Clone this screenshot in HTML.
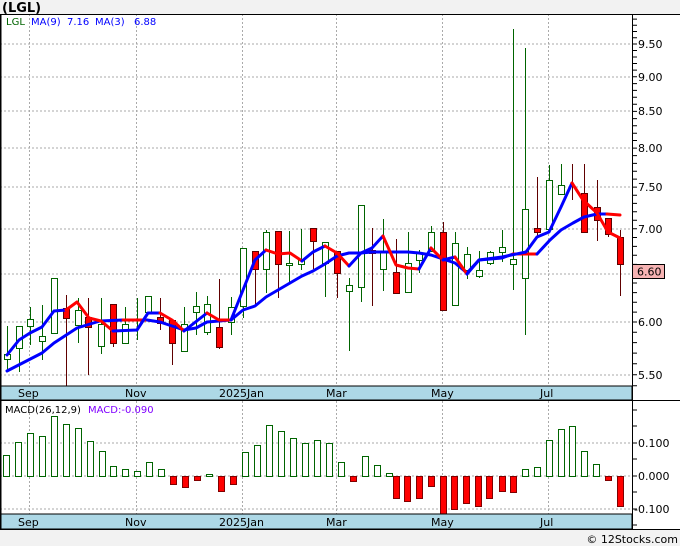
<!DOCTYPE html>
<html><head><meta charset="utf-8"><style>
html,body{margin:0;padding:0;background:#f2f2f2;}
svg{display:block;}
text{font-family:"DejaVu Sans","Liberation Sans",sans-serif;}
</style></head><body>
<svg width="680" height="546" viewBox="0 0 680 546" xmlns="http://www.w3.org/2000/svg">
<rect x="0" y="0" width="680" height="546" fill="#f2f2f2"/>
<text x="2" y="12" font-size="13" font-weight="bold" fill="#000" font-family="Liberation Sans">(LGL)</text>
<!-- main panel -->
<rect x="0" y="14" width="632" height="516" fill="#fff"/>
<rect x="632" y="14" width="48" height="516" fill="#fff"/>
<g stroke="#aaa" stroke-dasharray="2,2" stroke-width="1">
<line x1="0" x2="632" y1="44" y2="44"/><line x1="0" x2="632" y1="77" y2="77"/><line x1="0" x2="632" y1="111" y2="111"/><line x1="0" x2="632" y1="148" y2="148"/><line x1="0" x2="632" y1="187" y2="187"/><line x1="0" x2="632" y1="229" y2="229"/><line x1="0" x2="632" y1="274" y2="274"/><line x1="0" x2="632" y1="322" y2="322"/><line x1="0" x2="632" y1="375" y2="375"/>
<line x1="29.5" x2="29.5" y1="14" y2="386"/><line x1="136.5" x2="136.5" y1="14" y2="386"/><line x1="242.5" x2="242.5" y1="14" y2="386"/><line x1="336.5" x2="336.5" y1="14" y2="386"/><line x1="442.5" x2="442.5" y1="14" y2="386"/><line x1="548.5" x2="548.5" y1="14" y2="386"/>
<line x1="0" x2="632" y1="443" y2="443"/><line x1="0" x2="632" y1="476" y2="476"/><line x1="0" x2="632" y1="509" y2="509"/>
<line x1="29.5" x2="29.5" y1="401" y2="514"/><line x1="136.5" x2="136.5" y1="401" y2="514"/><line x1="242.5" x2="242.5" y1="401" y2="514"/><line x1="336.5" x2="336.5" y1="401" y2="514"/><line x1="442.5" x2="442.5" y1="401" y2="514"/><line x1="548.5" x2="548.5" y1="401" y2="514"/>
</g>
<text x="6" y="25" font-size="10" fill="#006400">LGL</text>
<text x="31" y="25" font-size="10" fill="#0000ff">MA(9)</text>
<text x="67" y="25" font-size="10" fill="#0000ff">7.16</text>
<text x="95" y="25" font-size="10" fill="#0000ff">MA(3)</text>
<text x="134" y="25" font-size="10" fill="#0000ff">6.88</text>
<!-- candles -->
<g stroke-width="1">
<g stroke="#006400" fill="#fff">
<line x1="7.5" x2="7.5" y1="326" y2="372"/><rect x="4.5" y="354.5" width="6" height="5"/>
<line x1="19.5" x2="19.5" y1="326" y2="372"/><rect x="16.5" y="326.5" width="6" height="22"/>
<line x1="30.5" x2="30.5" y1="307" y2="345"/><rect x="27.5" y="319.5" width="6" height="7"/>
<line x1="42.5" x2="42.5" y1="305" y2="360"/><rect x="39.5" y="336.5" width="6" height="5"/>
<rect x="51.5" y="278.5" width="6" height="55"/>
<line x1="78.5" x2="78.5" y1="298" y2="343"/><rect x="75.5" y="310.5" width="6" height="15"/>
<line x1="101.5" x2="101.5" y1="298" y2="354"/><rect x="98.5" y="324.5" width="6" height="22"/>
<line x1="125.5" x2="125.5" y1="307" y2="343"/><rect x="122.5" y="324.5" width="6" height="19"/>
<line x1="137.5" x2="137.5" y1="298" y2="340"/>
<rect x="145.5" y="296.5" width="6" height="16"/>
<line x1="184.5" x2="184.5" y1="307" y2="351"/><rect x="181.5" y="324.5" width="6" height="27"/>
<line x1="196.5" x2="196.5" y1="292" y2="335"/><rect x="193.5" y="306.5" width="6" height="6"/>
<line x1="207.5" x2="207.5" y1="296" y2="335"/><rect x="204.5" y="304.5" width="6" height="28"/>
<line x1="231.5" x2="231.5" y1="297" y2="335"/><rect x="228.5" y="307.5" width="6" height="15"/>
<line x1="243.5" x2="243.5" y1="248" y2="318"/><rect x="240.5" y="248.5" width="6" height="58"/>
<line x1="266.5" x2="266.5" y1="230" y2="293"/><rect x="263.5" y="232.5" width="6" height="37"/>
<line x1="289.5" x2="289.5" y1="231" y2="282"/><rect x="286.5" y="263.5" width="6" height="2"/>
<line x1="301.5" x2="301.5" y1="229" y2="270"/><rect x="298.5" y="259.5" width="6" height="5"/>
<line x1="325.5" x2="325.5" y1="242" y2="297"/><rect x="322.5" y="242.5" width="6" height="21"/>
<line x1="349.5" x2="349.5" y1="278" y2="351"/><rect x="346.5" y="285.5" width="6" height="6"/>
<line x1="361.5" x2="361.5" y1="205" y2="302"/><rect x="358.5" y="205.5" width="6" height="82"/>
<line x1="383.5" x2="383.5" y1="219" y2="291"/><rect x="380.5" y="251.5" width="6" height="18"/>
<line x1="408.5" x2="408.5" y1="232" y2="292"/><rect x="405.5" y="263.5" width="6" height="29"/>
<line x1="419.5" x2="419.5" y1="250" y2="273"/><rect x="416.5" y="253.5" width="6" height="7"/>
<line x1="431.5" x2="431.5" y1="226" y2="251"/><rect x="428.5" y="232.5" width="6" height="19"/>
<line x1="455.5" x2="455.5" y1="232" y2="305"/><rect x="452.5" y="243.5" width="6" height="62"/>
<line x1="467.5" x2="467.5" y1="247" y2="279"/><rect x="464.5" y="254.5" width="6" height="16"/>
<line x1="479.5" x2="479.5" y1="251" y2="278"/><rect x="476.5" y="270.5" width="6" height="6"/>
<line x1="490.5" x2="490.5" y1="251" y2="265"/><rect x="487.5" y="252.5" width="6" height="11"/>
<line x1="502.5" x2="502.5" y1="230" y2="262"/><rect x="499.5" y="247.5" width="6" height="5"/>
<line x1="513.5" x2="513.5" y1="29" y2="290"/><rect x="510.5" y="259.5" width="6" height="5"/>
<line x1="525.5" x2="525.5" y1="48" y2="335"/><rect x="522.5" y="209.5" width="6" height="69"/>
<line x1="549.5" x2="549.5" y1="165" y2="229"/><rect x="546.5" y="180.5" width="6" height="49"/>
<line x1="561.5" x2="561.5" y1="164" y2="194"/><rect x="558.5" y="185.5" width="6" height="9"/>
</g>
<g stroke="#600000" fill="#ff0000">
<line x1="66.5" x2="66.5" y1="295" y2="387"/><rect x="63.5" y="308.5" width="6" height="10"/>
<line x1="88.5" x2="88.5" y1="298" y2="375"/><rect x="85.5" y="317.5" width="6" height="10"/>
<line x1="113.5" x2="113.5" y1="304" y2="347"/><rect x="110.5" y="304.5" width="6" height="39"/>
<line x1="160.5" x2="160.5" y1="298" y2="330"/><rect x="157.5" y="317.5" width="6" height="6"/>
<line x1="172.5" x2="172.5" y1="320" y2="365"/><rect x="169.5" y="320.5" width="6" height="23"/>
<line x1="219.5" x2="219.5" y1="279" y2="349"/><rect x="216.5" y="327.5" width="6" height="20"/>
<line x1="255.5" x2="255.5" y1="251" y2="305"/><rect x="252.5" y="251.5" width="6" height="18"/>
<line x1="278.5" x2="278.5" y1="231" y2="298"/><rect x="275.5" y="231.5" width="6" height="33"/>
<line x1="313.5" x2="313.5" y1="228" y2="269"/><rect x="310.5" y="228.5" width="6" height="13"/>
<line x1="337.5" x2="337.5" y1="251" y2="298"/><rect x="334.5" y="251.5" width="6" height="22"/>
<line x1="372.5" x2="372.5" y1="228" y2="306"/><rect x="369.5" y="250.5" width="6" height="3"/>
<line x1="396.5" x2="396.5" y1="239" y2="293"/><rect x="393.5" y="272.5" width="6" height="21"/>
<line x1="443.5" x2="443.5" y1="222" y2="310"/><rect x="440.5" y="232.5" width="6" height="78"/>
<line x1="537.5" x2="537.5" y1="177" y2="238"/><rect x="534.5" y="228.5" width="6" height="4"/>
<line x1="572.5" x2="572.5" y1="164" y2="200"/>
<line x1="584.5" x2="584.5" y1="164" y2="232"/><rect x="581.5" y="193.5" width="6" height="39"/>
<line x1="597.5" x2="597.5" y1="180" y2="241"/><rect x="594.5" y="207.5" width="6" height="13"/>
<line x1="608.5" x2="608.5" y1="218" y2="237"/><rect x="605.5" y="218.5" width="6" height="16"/>
<line x1="620.5" x2="620.5" y1="230" y2="296"/><rect x="617.5" y="237.5" width="6" height="27"/>
</g>
</g>
<!-- MA lines -->
<g fill="none" stroke-width="3" stroke-linejoin="round" stroke-linecap="round">
<polyline stroke="#0000ff" points="7,371 42,353 54,343 77,328 100,321 123,320"/>
<polyline stroke="#ff0000" points="123,320 147,320"/>
<polyline stroke="#0000ff" points="147,320 160,322 172,326 184,330 196,328 207,322 219,321 231,320 243,310 255,306 266,297 278,290 290,283 302,276 313,271 325,264 337,256 349,253 361,253 372,252 383,252 396,252 408,252 419,253 431,255 443,259 455,263 467,273 479,260 502,258 513,254"/>
<polyline stroke="#ff0000" points="513,254 537,254"/>
<polyline stroke="#0000ff" points="537,254 550,240 561,230 573,223 584,217 597,214 607,214"/>
<polyline stroke="#ff0000" points="607,214 620,215"/>
<polyline stroke="#0000ff" points="7,355 19,340 30,333 42,327 54,311 66,310"/>
<polyline stroke="#ff0000" points="66,310 77,302 89,318 101,321 113,331"/>
<polyline stroke="#0000ff" points="113,331 137,330 148,313 160,313"/>
<polyline stroke="#ff0000" points="160,313 172,320 184,331"/>
<polyline stroke="#0000ff" points="184,331 207,313"/>
<polyline stroke="#ff0000" points="207,313 219,320 231,320"/>
<polyline stroke="#0000ff" points="231,320 243,290 255,260 266,250"/>
<polyline stroke="#ff0000" points="266,250 278,254 290,253 302,261"/>
<polyline stroke="#0000ff" points="302,261 313,252 325,246"/>
<polyline stroke="#ff0000" points="325,246 337,253 349,266"/>
<polyline stroke="#0000ff" points="349,266 361,253 372,248 383,236"/>
<polyline stroke="#ff0000" points="383,236 396,265 408,268 419,269"/>
<polyline stroke="#0000ff" points="419,269 431,248"/>
<polyline stroke="#ff0000" points="431,248 443,260"/>
<polyline stroke="#0000ff" points="443,260 455,257"/>
<polyline stroke="#ff0000" points="455,257 467,274"/>
<polyline stroke="#0000ff" points="467,274 479,260 502,257 526,252 537,237 549,232 561,207 572,183"/>
<polyline stroke="#ff0000" points="572,183 583,200 597,213 608,232 620,238"/>
</g>
<!-- axis strip main -->
<rect x="0" y="386" width="632" height="14" fill="#add8e6" stroke="#000" stroke-width="1"/>
<g font-size="11" fill="#000">
<text x="18" y="397">Sep</text><text x="125" y="397">Nov</text><text x="219" y="397">2025Jan</text><text x="326" y="397">Mar</text><text x="431" y="397">May</text><text x="540" y="397">Jul</text>
</g>
<!-- MACD panel -->
<text x="5" y="413" font-size="10" fill="#000">MACD(26,12,9)</text>
<text x="88" y="413" font-size="10" fill="#8000ff">MACD:-0.090</text>
<g stroke-width="1">
<g stroke="#006400" fill="#fff">
<rect x="3.5" y="455.5" width="6" height="21"/><rect x="15.5" y="442.5" width="6" height="34"/><rect x="27.5" y="433.5" width="6" height="43"/><rect x="39.5" y="436.5" width="6" height="40"/><rect x="51.5" y="416.5" width="6" height="60"/><rect x="63.5" y="424.5" width="6" height="52"/><rect x="75.5" y="428.5" width="6" height="48"/><rect x="87.5" y="441.5" width="6" height="35"/><rect x="99.5" y="451.5" width="6" height="25"/><rect x="110.5" y="466.5" width="6" height="10"/><rect x="122.5" y="469.5" width="6" height="7"/><rect x="134.5" y="471.5" width="6" height="5"/><rect x="146.5" y="462.5" width="6" height="14"/><rect x="158.5" y="469.5" width="6" height="7"/><rect x="206.5" y="474.5" width="6" height="2"/>
<rect x="242.5" y="452.5" width="6" height="24"/><rect x="254.5" y="445.5" width="6" height="31"/><rect x="266.5" y="425.5" width="6" height="51"/><rect x="278.5" y="431.5" width="6" height="45"/><rect x="290.5" y="438.5" width="6" height="38"/><rect x="302.5" y="443.5" width="6" height="33"/><rect x="314.5" y="440.5" width="6" height="36"/><rect x="326.5" y="443.5" width="6" height="33"/><rect x="338.5" y="462.5" width="6" height="14"/><rect x="362.5" y="456.5" width="6" height="20"/><rect x="374.5" y="465.5" width="6" height="11"/><rect x="386.5" y="473.5" width="6" height="3"/>
<rect x="522.5" y="469.5" width="6" height="7"/><rect x="534.5" y="467.5" width="6" height="9"/><rect x="546.5" y="440.5" width="6" height="36"/><rect x="558.5" y="429.5" width="6" height="47"/><rect x="569.5" y="426.5" width="6" height="50"/><rect x="581.5" y="451.5" width="6" height="25"/><rect x="593.5" y="464.5" width="6" height="12"/>
</g>
<g stroke="#800000" fill="#ff0000">
<rect x="170.5" y="476.5" width="6" height="8"/><rect x="182.5" y="476.5" width="6" height="11"/><rect x="194.5" y="476.5" width="6" height="4"/><rect x="218.5" y="476.5" width="6" height="15"/><rect x="230.5" y="476.5" width="6" height="8"/><rect x="350.5" y="476.5" width="6" height="5"/>
<rect x="393.5" y="476.5" width="6" height="22"/><rect x="404.5" y="476.5" width="6" height="25"/><rect x="416.5" y="476.5" width="6" height="22"/><rect x="428.5" y="476.5" width="6" height="10"/><rect x="440.5" y="476.5" width="6" height="39"/><rect x="451.5" y="476.5" width="6" height="33"/><rect x="463.5" y="476.5" width="6" height="27"/><rect x="475.5" y="476.5" width="6" height="30"/><rect x="486.5" y="476.5" width="6" height="22"/><rect x="499.5" y="476.5" width="6" height="15"/><rect x="510.5" y="476.5" width="6" height="16"/>
<rect x="605.5" y="476.5" width="6" height="4"/><rect x="617.5" y="476.5" width="6" height="30"/>
</g>
</g>
<rect x="0" y="514" width="632" height="15" fill="#add8e6" stroke="#000" stroke-width="1"/>
<g font-size="11" fill="#000">
<text x="18" y="526">Sep</text><text x="125" y="526">Nov</text><text x="219" y="526">2025Jan</text><text x="326" y="526">Mar</text><text x="431" y="526">May</text><text x="540" y="526">Jul</text>
</g>
<!-- borders -->
<line x1="0.5" y1="14" x2="0.5" y2="530" stroke="#000" stroke-width="2"/>
<line x1="0" y1="14.5" x2="680" y2="14.5" stroke="#000"/>
<line x1="632.5" y1="14" x2="632.5" y2="530" stroke="#000"/>
<line x1="0" y1="400.5" x2="680" y2="400.5" stroke="#000"/>
<line x1="0" y1="529.5" x2="680" y2="529.5" stroke="#000"/>
<!-- right ticks -->
<g stroke="#000">
<path d="M632 385.8h5M632 374.7h5M632 363.8h5M632 353.1h5M632 342.6h5M632 332.2h5M632 322h5M632 312.1h5M632 302.3h5M632 292.6h5M632 283h5M632 273.7h5M632 264.4h5M632 255.3h5M632 246.4h5M632 237.5h5M632 228.8h5M632 220.2h5M632 211.8h5M632 203.4h5M632 195.2h5M632 187.1h5M632 179.1h5M632 171.2h5M632 163.4h5M632 155.6h5M632 148.1h5M632 140.5h5M632 133.2h5M632 125.8h5M632 118.6h5M632 111.4h5M632 104.3h5M632 97.3h5M632 90.4h5M632 83.6h5M632 76.8h5M632 70.1h5M632 63.5h5M632 57h5M632 50.5h5M632 44h5M632 37.7h5M632 31.5h5M632 25.3h5M632 19.1h5"/>
<path d="M632 410h5M632 426h5M632 443h5M632 459h5M632 476h5M632 492h5M632 509h5M632 525h5"/>
</g>
<g font-size="11" fill="#000">
<text x="638" y="48">9.50</text><text x="638" y="81">9.00</text><text x="638" y="115">8.50</text><text x="638" y="152">8.00</text><text x="638" y="191">7.50</text><text x="638" y="233">7.00</text><text x="638" y="326">6.00</text><text x="638" y="379">5.50</text>
<text x="638" y="447">0.100</text><text x="638" y="480">0.000</text><text x="634" y="513">-0.100</text>
</g>
<rect x="632.5" y="264.5" width="32" height="14" fill="#f6b3b3" stroke="#000"/>
<text x="637" y="275.5" font-size="11" fill="#000">6.60</text>
<rect x="0" y="530" width="680" height="16" fill="#f2f2f2"/>
<text x="678" y="543" font-size="11" fill="#000" text-anchor="end">© 12Stocks.com</text>
</svg>
</body></html>
